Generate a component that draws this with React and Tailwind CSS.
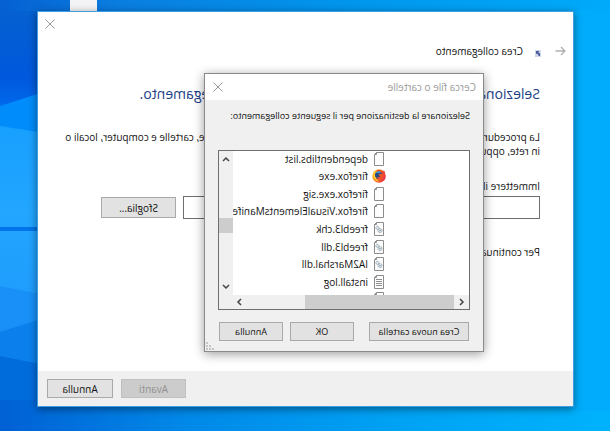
import React from 'react';

const files = [
  { name: 'dependentlibs.list', type: 'page' },
  { name: 'firefox.exe', type: 'firefox' },
  { name: 'firefox.exe.sig', type: 'page' },
  { name: 'firefox.VisualElementsManifest.xml', type: 'page' },
  { name: 'freebl3.chk', type: 'gears' },
  { name: 'freebl3.dll', type: 'gears' },
  { name: 'IA2Marshal.dll', type: 'gears' },
  { name: 'install.log', type: 'lines' },
  { name: 'lgpllibs.dll', type: 'page' },
];

const Wallpaper = () => (
  <svg
    className="absolute inset-0 h-full w-full"
    viewBox="0 0 610 431"
    preserveAspectRatio="none"
    aria-hidden="true"
  >
    <defs>
      <linearGradient id="sky" x1="0" x2="1" y1="0" y2="0">
        <stop offset="0" stopColor="#00aafa" />
        <stop offset="0.4" stopColor="#0098ee" />
        <stop offset="0.8" stopColor="#0a7ee0" />
        <stop offset="1" stopColor="#0560d2" />
      </linearGradient>
      <linearGradient id="edge" x1="0" x2="0" y1="0" y2="1">
        <stop offset="0" stopColor="#0560d0" />
        <stop offset="0.55" stopColor="#0058dc" />
        <stop offset="1" stopColor="#0078fa" />
      </linearGradient>
      <linearGradient id="pane" x1="0" x2="0" y1="0" y2="1">
        <stop offset="0" stopColor="#18a0ff" />
        <stop offset="0.4" stopColor="#22a6ff" />
        <stop offset="1" stopColor="#1e98fc" />
      </linearGradient>
      <linearGradient id="floor" x1="0" x2="1" y1="0" y2="0">
        <stop offset="0" stopColor="#00b2fc" />
        <stop offset="0.35" stopColor="#00a2f4" />
        <stop offset="0.7" stopColor="#0088e8" />
        <stop offset="1" stopColor="#0060d4" />
      </linearGradient>
    </defs>
    <rect width="610" height="431" fill="url(#sky)" />
    <rect x="560" y="11" width="50" height="120" fill="url(#edge)" />
    <path d="M560 90 L610 106 V140 H560Z" fill="#008cfa" />
    <path d="M560 134 L610 126 V340 H560Z" fill="url(#pane)" />
    <rect x="560" y="227" width="50" height="4" fill="#0074e8" />
    <path d="M560 296 L610 286 V362 H560Z" fill="#1890f8" />
    <path d="M560 316 L610 332 V431 H560Z" fill="#0b80ec" />
    <path d="M560 366 L610 356 V431 H560Z" fill="#006cdc" />
    <rect y="400" width="610" height="31" fill="url(#floor)" />
    <rect y="11" width="60" height="400" fill="#00acfb" />
    <rect x="513" width="27" height="14" fill="#f4f4f6" />
  </svg>
);

const CloseIcon = () => (
  <svg className="h-[10px] w-[10px]" viewBox="0 0 10 10" stroke="#9a9a9a" aria-hidden="true">
    <path d="M0.5 0.5 L9.5 9.5 M9.5 0.5 L0.5 9.5" />
  </svg>
);

const FirefoxIcon = () => (
  <svg className="h-[14px] w-[14px]" viewBox="0 0 14 14" aria-hidden="true">
    <defs>
      <linearGradient id="fox" x1="0" x2="1" y1="0.7" y2="0.2">
        <stop offset="0" stopColor="#e8264a" />
        <stop offset="0.55" stopColor="#ff7a1c" />
        <stop offset="1" stopColor="#ffd836" />
      </linearGradient>
    </defs>
    <circle cx="7" cy="7" r="6.8" fill="url(#fox)" />
    <path d="M1 3.4 L2 1.4 L3.4 2.8 Q6 0.4 9.6 1.2 L7.4 3.4 L2.4 5.6Z" fill="#f0452e" />
    <circle cx="7.4" cy="6.2" r="3.7" fill="#254a84" />
    <path d="M5 2.9 Q7.6 1.4 10 3.4 L8.6 4.2 Q7 3.6 5.6 4Z" fill="#3fa5d8" />
    <path d="M3 5 L6.4 4.8 L7.6 6 L5.8 7.2 Q6.6 8.8 9.6 8 Q8 10.8 5 9.8 Q2.8 8.4 3 5Z" fill="#f0562a" />
    <path d="M10.6 2.4 Q13 5 12 8.6 Q10.4 12.4 6.8 12.6 Q12.4 9 10.6 2.4Z" fill="#ffcf3a" />
  </svg>
);

const FileIcon = ({ type }) => {
  if (type === 'firefox') return <FirefoxIcon />;
  return (
    <svg className="h-[14px] w-[14px]" viewBox="0 0 14 14" fill="none" aria-hidden="true">
      <path d="M2.5 0.5 H9.5 L11.5 2.5 V13.5 H2.5Z" fill="#fdfdfd" stroke="#8c8c8c" />
      <path d="M9.5 0.5 V2.5 H11.5" stroke="#8c8c8c" />
      {type === 'lines' && <path d="M4 4.5 H10 M4 6.5 H10 M4 8.5 H10 M4 10.5 H10" stroke="#8e8e8e" />}
      {type === 'gears' && (
        <g stroke="#8fa0ac">
          <circle cx="6" cy="8.6" r="2.1" fill="#dfe6ea" strokeDasharray="1.2 0.5" />
          <circle cx="8.6" cy="5.8" r="1.6" fill="#dfe6ea" strokeDasharray="1 0.5" />
          <circle cx="6" cy="8.6" r="0.5" fill="#fff" />
        </g>
      )}
    </svg>
  );
};

const Chevron = ({ d }) => (
  <svg className="h-[8px] w-[8px]" viewBox="0 0 8 8" fill="none" stroke="#444" strokeWidth="1.5" aria-hidden="true">
    <path d={d} />
  </svg>
);

const Button = ({ className, children, disabled }) => (
  <button
    type="button"
    disabled={disabled}
    className={`flex items-center justify-center border whitespace-nowrap ${
      disabled ? 'border-[#c0c0c0] bg-[#cccccc] text-[#909090]' : 'border-[#a9a9a9] bg-[#e2e2e2] text-[#111]'
    } ${className}`}
  >
    {children}
  </button>
);

const BrowseDialog = () => (
  <section
    role="dialog"
    aria-labelledby="browse-title"
    className="absolute top-[61px] right-[166px] left-[89px] flex flex-col border border-[#8a8a8a] bg-[#f0f0f0] shadow-[0_2px_10px_rgba(0,0,0,0.4)]"
  >
    <header className="flex h-[26px] items-center justify-between bg-white pr-2 pl-[7px]">
      <h2 id="browse-title" className="text-[#999]">Cerca file o cartelle</h2>
      <button type="button" aria-label="Chiudi"><CloseIcon /></button>
    </header>
    <p className="px-[13px] pt-2 text-[9px] whitespace-nowrap">
      Selezionare la destinazione per il seguente collegamento:
    </p>

    <div className="mx-[13px] mt-[26px] flex flex-col border border-[#6e6e6e] bg-white">
      <div className="flex h-[144px]">
        <ul className="-mt-px grid h-[158px] min-w-0 flex-1 auto-rows-fr overflow-hidden pl-[83px] [clip-path:inset(0_0_13px_0)]">
          {files.map((file) => (
            <li key={file.name} className="flex items-center gap-1 overflow-hidden whitespace-nowrap">
              <span className="shrink-0"><FileIcon type={file.type} /></span>
              <span>{file.name}</span>
            </li>
          ))}
        </ul>
        <div className="flex w-[14px] flex-col items-center bg-[#f0f0f0] py-1">
          <Chevron d="M1 6 L4 3 L7 6" />
          <div className="mt-[55px] h-[15px] w-full bg-[#cdcdcd]" />
          <div className="flex-1" />
          <Chevron d="M1 2 L4 5 L7 2" />
        </div>
      </div>
      <div className="flex h-[14px] items-center bg-[#f0f0f0] pr-[17px] pl-1">
        <Chevron d="M5 1 L2 4 L5 7" />
        <div className="ml-[3px] h-full w-[149px] bg-[#cdcdcd]" />
        <div className="flex-1" />
        <Chevron d="M3 1 L6 4 L3 7" />
      </div>
    </div>

    <div className="mx-[14px] mt-3 mb-[10px] flex gap-[7px] text-[9px]">
      <Button className="mr-2 h-[19px] w-[100px]">Crea nuova cartella</Button>
      <Button className="h-[19px] flex-1">OK</Button>
      <Button className="h-[19px] flex-1">Annulla</Button>
    </div>
    <svg className="absolute right-0 bottom-0 h-[9px] w-[9px]" viewBox="0 0 9 9" fill="#c4c4c4" aria-hidden="true">
      <path d="M6 0h2v2h-2z M3 3h2v2h-2z M6 3h2v2h-2z M0 6h2v2h-2z M3 6h2v2h-2z M6 6h2v2h-2z" />
    </svg>
  </section>
);

const Wizard = () => (
  <main className="relative flex min-w-0 flex-1 flex-col border border-[#3d9fe0] bg-white shadow-[0_2px_8px_rgba(0,0,0,0.45)]">
    <div className="flex h-6 items-center justify-end pr-[7px]">
      <button type="button" aria-label="Chiudi"><CloseIcon /></button>
    </div>
    <header className="flex h-[30px] items-center pl-[7px]">
      <button type="button" aria-label="Indietro">
        <svg className="h-[10px] w-[11px]" viewBox="0 0 11 10" fill="none" stroke="#b0b0b0" strokeWidth="1.3">
          <path d="M10.5 5 H1 M5 1 L1 5 L5 9" />
        </svg>
      </button>
      <svg className="mt-1 ml-[14px] h-[7px] w-[6px]" viewBox="0 0 6 7" aria-hidden="true">
        <rect width="6" height="7" fill="#cfd8ea" />
        <path d="M1 6 V3.5 L3 2 H2 V1 H5 V4 H4.2 V3.2 L2.6 5 V6Z" fill="#4c5c98" />
      </svg>
      <h1 className="ml-[12px]">Crea collegamento</h1>
    </header>

    <div className="flex-1 pr-[63px] pl-[33px]">
      <h2 className="mt-4 text-[14px] leading-6 whitespace-nowrap text-[#1c3f86]">
        Selezionare l&apos;elemento per cui si vuole creare il collegamento.
      </h2>
      <p className="mt-6 leading-[14px] whitespace-nowrap">
        La procedura guidata permette di creare i collegamenti ai programmi, file, cartelle e computer, locali o
        <br />
        in rete, oppure a indirizzi Internet.
      </p>
      <label htmlFor="path" className="mt-5 block">Immettere il percorso per il collegamento:</label>
      <div className="mt-[2px] flex items-center gap-[7px]">
        <input id="path" type="text" className="h-[23px] min-w-0 flex-1 border border-[#6e6e6e] bg-white px-1" />
        <Button className="h-[21px] w-[75px]">Sfoglia...</Button>
      </div>
      <p className="mt-[25px]">Per continuare, fare clic su Avanti.</p>
    </div>

    <footer className="flex h-[35px] items-center justify-end gap-2 bg-[#f0f0f0] pr-[9px]">
      <Button className="h-[19px] w-[65px]" disabled>Avanti</Button>
      <Button className="h-[19px] w-[66px]">Annulla</Button>
    </footer>
    <BrowseDialog />
  </main>
);

const App = () => (
  <div className="relative flex min-h-screen -scale-x-100 overflow-hidden bg-[#00a4f6] pt-[11px] pr-[37px] pb-6 pl-9 font-['Open_Sans','Noto_Sans',sans-serif] text-[10px] leading-4 text-[#111]">
    <Wallpaper />
    <Wizard />
  </div>
);

export default App;
